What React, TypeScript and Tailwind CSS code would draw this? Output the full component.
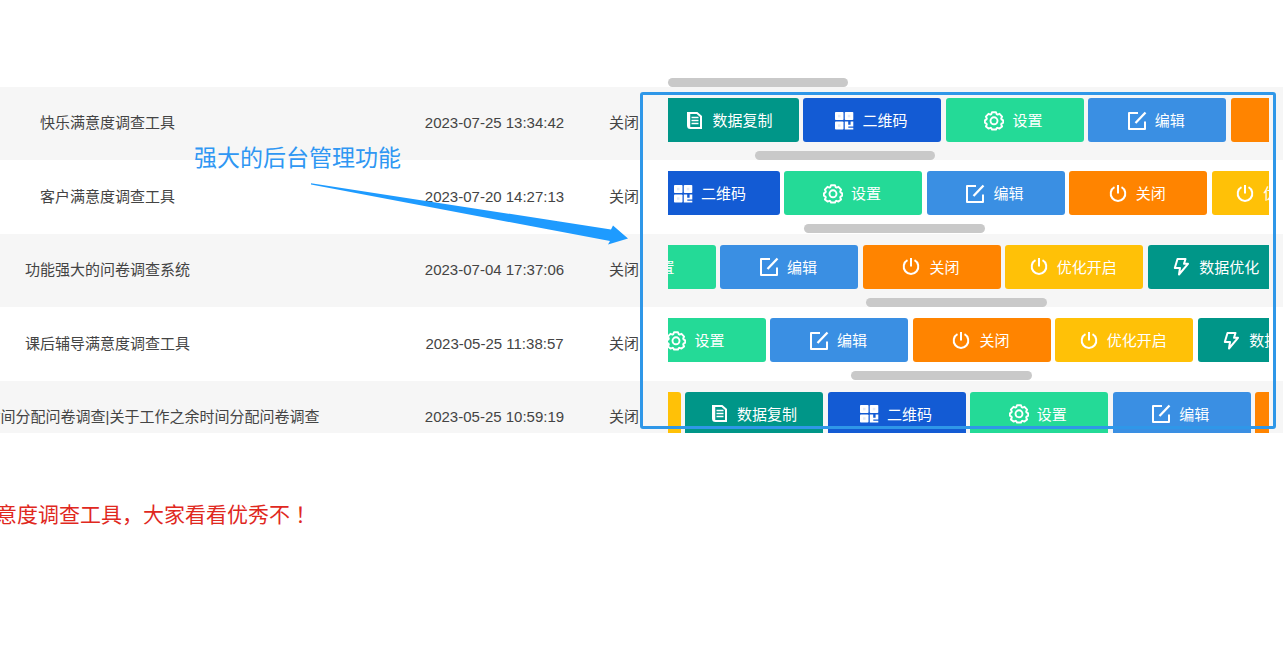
import React from "react";

type ActionKey = "copy" | "qr" | "settings" | "edit" | "close" | "open" | "optimize";

const power = (
  <g fill="none" stroke="currentColor" strokeWidth="2">
    <path d="M6.500 4.200a7.300 7.300 0 1 0 7 0" />
    <path d="M10 2v8.500" />
  </g>
);

const icons: Record<ActionKey, React.ReactNode> = {
  copy: (
    <g fill="none" stroke="currentColor">
      <path d="M4 3h9l4 3.500V18H6.500A2.500 2.500 0 0 1 4 15.500z" strokeWidth="2" />
      <path d="M5.500 3v14.500" strokeWidth="1.500" />
      <path d="M7.500 7.500h7M7.500 10.500h7M7.500 13.500h7" strokeWidth="1.500" />
    </g>
  ),
  qr: (
    <g fill="currentColor">
      <rect x="1" y="2" width="8.500" height="8" rx="0.800" />
      <rect x="10.800" y="2" width="8.500" height="8" rx="0.800" />
      <rect x="1" y="11.500" width="8.500" height="8" rx="0.800" />
      <path d="M10.800 11.500h3.400v3.200h2.400v-3.200h2.700v5h-5v1.200h5v1.800h-8.500z" />
      <g fill="#135bd4" opacity="0.120">
        <rect x="4" y="4.800" width="2.500" height="2.500" />
        <rect x="13.800" y="4.800" width="2.500" height="2.500" />
        <rect x="4" y="14.300" width="2.500" height="2.500" />
      </g>
    </g>
  ),
  settings: (
    <g fill="none" stroke="currentColor" strokeWidth="1.900" strokeLinejoin="round">
      <path d="M8 2.200h4l.7 2 .8.400 2-.8 2.600 2.800-.9 1.900.3.900 1.700 1v2.200l-1.700 1-.3.900.9 1.900-2.600 2.200-2-.8-.8.400-.7 1.300H8l-.7-1.300-.8-.4-2 .8-2.600-2.200.9-1.900-.3-.9-1.600-1v-2.200l1.600-1 .3-.9-.9-1.900 2.600-2.800 2 .8.800-.4z" />
      <circle cx="10" cy="10.800" r="3.500" />
    </g>
  ),
  edit: (
    <g fill="none" stroke="currentColor" strokeWidth="2" strokeLinejoin="round">
      <path d="M11 3H2v16h16v-7.500" />
      <path d="M18.500 2.500 8.500 13" strokeWidth="2.300" />
    </g>
  ),
  close: power,
  open: power,
  optimize: (
    <path
      d="M6.500 3h8l-1.500 4.800h4L8 18.500l1-6.500H3.800z"
      fill="none"
      stroke="currentColor"
      strokeWidth="2"
      strokeLinejoin="round"
    />
  ),
};

const actions: Record<ActionKey, { label: string; color: string }> = {
  copy: { label: "数据复制", color: "bg-[#009688]" },
  qr: { label: "二维码", color: "bg-[#135bd4]" },
  settings: { label: "设置", color: "bg-[#24da97]" },
  edit: { label: "编辑", color: "bg-[#3a8fe3]" },
  close: { label: "关闭", color: "bg-[#ff8400]" },
  open: { label: "优化开启", color: "bg-[#ffc107]" },
  optimize: { label: "数据优化", color: "bg-[#009688]" },
};

type Survey = {
  name: string;
  date: string;
  shift: number;
  thumb: number;
  keys: ActionKey[];
};

const surveys: Survey[] = [
  { name: "快乐满意度调查工具", date: "2023-07-25 13:34:42", shift: 7, thumb: 14.5, keys: ["copy", "qr", "settings", "edit", "close"] },
  { name: "客户满意度调查工具", date: "2023-07-20 14:27:13", shift: 26, thumb: 22.7, keys: ["qr", "settings", "edit", "close", "open"] },
  { name: "功能强大的问卷调查系统", date: "2023-07-04 17:37:06", shift: 90, thumb: 33, keys: ["settings", "edit", "close", "open", "optimize"] },
  { name: "课后辅导满意度调查工具", date: "2023-05-25 11:38:57", shift: 40, thumb: 30.5, keys: ["settings", "edit", "close", "open", "optimize"] },
  { name: "关于工作之余时间分配问卷调查|关于工作之余时间分配问卷调查", date: "2023-05-25 10:59:19", shift: 125, thumb: 0, keys: ["open", "copy", "qr", "settings", "edit", "close"] },
];

function ScrollThumb({ start }: { start: number }) {
  return <div className="h-[9px] w-[30%] rounded-full bg-[#c9c9c9]" style={{ marginLeft: `${start}%` }} />;
}

function ActionButton({ kind }: { kind: ActionKey }) {
  const { label, color } = actions[kind];
  return (
    <button
      type="button"
      className={`inline-flex h-11 w-[138px] items-center justify-center gap-2 rounded-[3px] pt-px pr-[3px] align-top text-[15px] text-white ${color}`}
    >
      <svg viewBox="0 1 20 20" className="size-5 shrink-0" aria-hidden="true">
        {icons[kind]}
      </svg>
      {label}
    </button>
  );
}

function SurveyRow({ survey }: { survey: Survey }) {
  return (
    <tr className="odd:bg-[#f6f6f6]">
      <td className="p-0">{survey.name}</td>
      <td className="p-0">{survey.date}</td>
      <td className="p-0">关闭</td>
      <td className="px-[14px] pt-[11px] pb-0 align-top">
        <div className="overflow-hidden text-left text-base leading-none">
          <div style={{ marginLeft: -survey.shift }}>
            {survey.keys.map((key) => (
              <React.Fragment key={key}>
                <ActionButton kind={key} />{" "}
              </React.Fragment>
            ))}
          </div>
        </div>
        <div className="pt-[9px]">
          <ScrollThumb start={survey.thumb} />
        </div>
      </td>
    </tr>
  );
}

export default function App() {
  return (
    <main className="min-h-screen overflow-hidden bg-white pt-[78px] font-['Liberation_Sans','Noto_Sans_CJK_SC',sans-serif] text-[#444]">
      <div className="relative">
        <div className="ml-[654px] px-[14px]">
          <ScrollThumb start={0} />
        </div>
        <div className="h-[346px] overflow-hidden">
          <table className="-ml-[180px] h-[367px] w-[calc(100%+180px)] table-fixed border-collapse text-center text-[15px] whitespace-nowrap">
            <colgroup>
              <col className="w-[575px]" />
              <col className="w-[199px]" />
              <col className="w-[60px]" />
              <col />
            </colgroup>
            <tbody>
              {surveys.map((survey) => (
                <SurveyRow key={survey.date} survey={survey} />
              ))}
            </tbody>
          </table>
        </div>
        <div className="pointer-events-none absolute top-[14px] right-[7px] bottom-1 left-[640px] rounded-[3px] border-3 border-[#2f97e8]" />
        <p className="absolute top-[66px] left-[194px] text-[23px] leading-7 whitespace-nowrap text-[#2f97f3]">强大的后台管理功能</p>
        <svg viewBox="0 0 320 66" className="absolute top-[104px] left-[310px] h-[66px] w-[320px]" aria-hidden="true">
          <path d="M1 1.200 301 47.500 303 43.500 318 56.500 298 62.500 300 59 1 2.600z" fill="#1e9bff" />
        </svg>
      </div>
      <p className="-ml-[25px] pt-[66px] text-[21px] leading-7 whitespace-nowrap text-[#e0281e]">
        满意度调查工具，大家看看优秀不<span className="font-['Noto_Sans_CJK_TC',sans-serif]">！</span>
      </p>
    </main>
  );
}
